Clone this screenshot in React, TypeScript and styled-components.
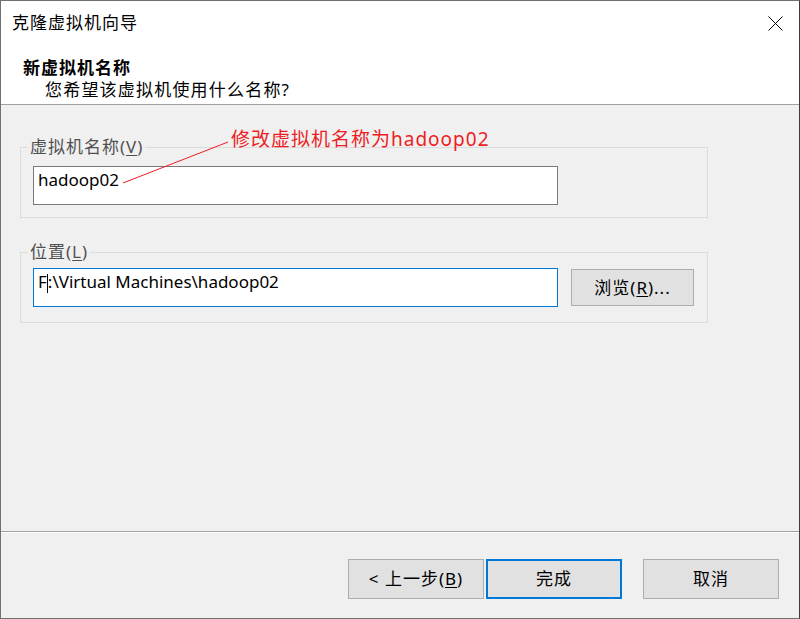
import React from "react";
import styled, { createGlobalStyle } from "styled-components";

const GlobalStyle = createGlobalStyle`
  html, body { margin: 0; padding: 0; background: #ffffff; }
  * { box-sizing: border-box; }
`;

const FONT = `"Segoe UI", "Noto Sans", "Noto Sans CJK SC", sans-serif`;

const Window = styled.div`
  width: 800px;
  height: 619px;
  border: 1px solid #707070;
  border-right-color: #3c3c3c;
  display: flex;
  flex-direction: column;
  background: #f0f0f0;
  color: #000;
  font-family: ${FONT};
  overflow: hidden;
`;

const TitleBar = styled.div`
  height: 44px;
  flex: none;
  background: #fff;
  display: flex;
  align-items: center;
  justify-content: space-between;
  padding: 0 16px 0 11px;
`;

const TitleText = styled.div`
  font-size: 17px;
  letter-spacing: 1px;
  line-height: 22px;
`;

const CloseButton = styled.div`
  width: 15px;
  height: 15px;
  display: flex;
`;

const Header = styled.div`
  height: 60px;
  flex: none;
  background: #fff;
  border-bottom: 1px solid #a0a0a0;
  padding: 12px 0 0 22px;
`;

const HeaderTitle = styled.div`
  font-size: 17px;
  letter-spacing: 1px;
  font-weight: 700;
  line-height: 22px;
`;

const HeaderSub = styled.div`
  font-size: 17px;
  letter-spacing: 1.2px;
  line-height: 22px;
  padding-left: 22px;
`;

const Body = styled.div`
  flex: 1;
  position: relative;
  padding: 31px 0 0 19px;
  display: flex;
  flex-direction: column;
  gap: 23px;
`;

const Group = styled.fieldset<{ $raise?: number }>`
  width: 688px;
  margin: 0;
  border: 1px solid #dcdcdc;
  padding: ${(p) => 8 - (p.$raise ?? 0)}px 12px ${(p) => 12 + (p.$raise ?? 0)}px 12px;
  display: flex;
  align-items: center;
  gap: 13px;
`;

const Legend = styled.legend`
  font-size: 17px;
  letter-spacing: 1px;
  line-height: 22px;
  color: #505050;
  padding: 0 2px;
  margin-left: -5px;
`;

const Mnemonic = styled.span`
  text-decoration: underline;
  text-underline-offset: 2px;
`;

const TextBox = styled.div<{ $focused?: boolean }>`
  width: 525px;
  height: 39px;
  background: #fff;
  border: 1px solid ${(p) => (p.$focused ? "#0078d7" : "#7a7a7a")};
  padding: 1px 4px 0 4px;
  font-size: 17px;
  line-height: 24px;
  white-space: pre;
  display: flex;
  align-items: flex-start;
`;

const Caret = styled.span`
  display: inline-block;
  width: 1px;
  height: 19px;
  margin-top: 4px;
  background: #000;
`;

const PushButton = styled.div<{ $default?: boolean; $w?: number; $h?: number }>`
  width: ${(p) => p.$w ?? 136}px;
  height: ${(p) => p.$h ?? 40}px;
  background: #e1e1e1;
  border: ${(p) => (p.$default ? "2px solid #0078d7" : "1px solid #adadad")};
  display: flex;
  align-items: center;
  justify-content: center;
  font-size: 17px;
  letter-spacing: 1px;
  line-height: 22px;
  color: #000;
  flex: none;
`;

const Footer = styled.div`
  height: 87px;
  flex: none;
  border-top: 1px solid #a0a0a0;
  box-shadow: inset 0 1px 0 #ffffff;
  padding: 27px 20px 19px 0;
  display: flex;
  justify-content: flex-end;
  align-items: flex-start;
`;

const ButtonPair = styled.div`
  display: flex;
  gap: 2px;
  margin-right: 21px;
`;

const Annotation = styled.div`
  position: absolute;
  left: 230px;
  top: 21px;
  font-size: 19px;
  letter-spacing: 1px;
  line-height: 26px;
  color: #ee1d24;
  white-space: nowrap;
`;

const AnnotationLine = styled.svg`
  position: absolute;
  left: 0;
  top: 0;
  width: 300px;
  height: 120px;
  pointer-events: none;
`;

export default function App() {
  return (
    <>
      <GlobalStyle />
      <Window>
        <TitleBar>
          <TitleText>克隆虚拟机向导</TitleText>
          <CloseButton>
            <svg width="15" height="15" viewBox="0 0 15 15">
              <path d="M0.5 0.5 L14.5 14.5 M14.5 0.5 L0.5 14.5" stroke="#000" strokeWidth="1" fill="none" />
            </svg>
          </CloseButton>
        </TitleBar>
        <Header>
          <HeaderTitle>新虚拟机名称</HeaderTitle>
          <HeaderSub>您希望该虚拟机使用什么名称?</HeaderSub>
        </Header>
        <Body>
          <Group>
            <Legend>
              虚拟机名称(<Mnemonic>V</Mnemonic>)
            </Legend>
            <TextBox>hadoop02</TextBox>
          </Group>
          <Group $raise={3}>
            <Legend>
              位置(<Mnemonic>L</Mnemonic>)
            </Legend>
            <TextBox $focused>
              F<Caret />:\Virtual Machines\hadoop02
            </TextBox>
            <PushButton $w={123} $h={37}>
              浏览(<Mnemonic>R</Mnemonic>)...
            </PushButton>
          </Group>
          <AnnotationLine viewBox="0 0 300 120">
            <line x1="122" y1="78" x2="227" y2="37" stroke="#ee1d24" strokeWidth="1" />
          </AnnotationLine>
          <Annotation>修改虚拟机名称为hadoop02</Annotation>
        </Body>
        <Footer>
          <ButtonPair>
            <PushButton>
              &lt; 上一步(<Mnemonic>B</Mnemonic>)
            </PushButton>
            <PushButton $default>完成</PushButton>
          </ButtonPair>
          <PushButton>取消</PushButton>
        </Footer>
      </Window>
    </>
  );
}
